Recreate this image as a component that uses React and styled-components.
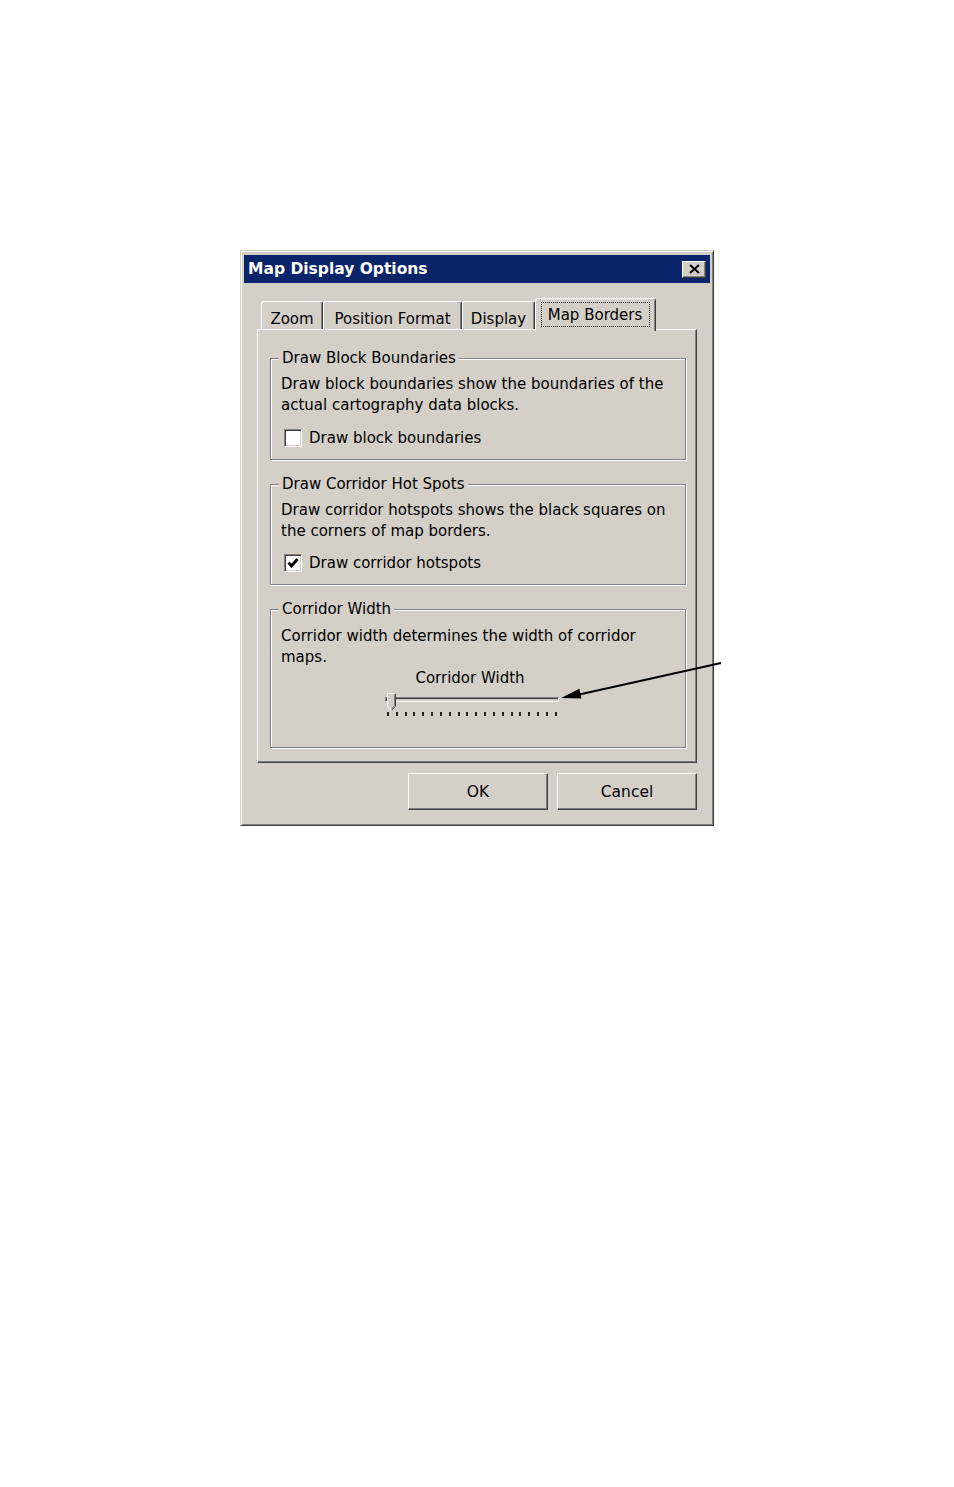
import React from 'react';
import styled, { createGlobalStyle } from 'styled-components';

const GlobalStyle = createGlobalStyle`
  html, body {
    margin: 0;
    padding: 0;
    background: #ffffff;
  }
  body {
    font-family: "DejaVu Sans", "Liberation Sans", sans-serif;
    font-size: 15px;
    color: #000;
  }
`;

const Page = styled.div`
  width: 954px;
  height: 1487px;
  padding: 250px 0 0 240px;
  box-sizing: border-box;
`;

const Win = styled.div`
  position: relative;
  width: 474px;
  height: 576px;
  box-sizing: border-box;
  background: #d4d0c8;
  border: 1px solid;
  border-color: #d4d0c8 #404040 #404040 #d4d0c8;
  box-shadow: inset 1px 1px 0 #fff, inset -1px -1px 0 #808080;
  padding: 4px 3px 3px 3px;
  display: flex;
  flex-direction: column;
`;

const TitleBar = styled.div`
  height: 28px;
  background: #0a246a;
  display: flex;
  align-items: center;
  justify-content: space-between;
  padding: 0 4px;
`;

const TitleText = styled.span`
  color: #fff;
  font-weight: bold;
  font-size: 15.5px;
`;

const CloseBtn = styled.div`
  width: 24px;
  height: 17px;
  box-sizing: border-box;
  background: #d4d0c8;
  border: 1px solid;
  border-color: #fff #404040 #404040 #fff;
  box-shadow: inset -1px -1px 0 #808080;
  display: flex;
  align-items: center;
  justify-content: center;
`;

const Body = styled.div`
  padding: 15px 13px 0 13px;
  display: flex;
  flex-direction: column;
`;

const TabRow = styled.div`
  display: flex;
  align-items: flex-start;
  height: 31px;
  padding-left: 4px;
`;

const Tab = styled.div`
  position: relative;
  z-index: ${p => (p.$active ? 2 : 1)};
  width: ${p => p.$w}px;
  height: ${p => (p.$active ? 33 : 28)}px;
  margin-top: ${p => (p.$active ? 0 : 3)}px;
  box-sizing: border-box;
  background: #d4d0c8;
  border: 1px solid;
  border-bottom: none;
  border-color: #fff #404040 transparent #fff;
  border-radius: 3px 3px 0 0;
  box-shadow: inset -1px 0 0 #808080;
  display: flex;
  justify-content: center;
  padding-top: ${p => (p.$active ? 3 : 6)}px;
`;

const FocusLabel = styled.span`
  display: inline-block;
  height: 25px;
  line-height: 24px;
  box-sizing: border-box;
  padding: 0 7px 0 6px;
  border: 1px dotted #000;
`;

const TabLabel = styled.span`
  line-height: 22px;
`;

const Panel = styled.div`
  height: 434px;
  box-sizing: border-box;
  border: 1px solid;
  border-color: #fff #404040 #404040 #fff;
  box-shadow: inset -1px -1px 0 #808080;
  padding: 18px 10px 0 12px;
  display: flex;
  flex-direction: column;
  gap: 14px;
`;

const Group = styled.fieldset`
  margin: 0;
  padding: 0;
  min-width: 0;
  border: 1px solid #808080;
  box-shadow: inset 1px 1px 0 #fff, 1px 1px 0 #fff;
`;

const Legend = styled.legend`
  margin-left: 8px;
  padding: 0 3px;
  line-height: 21px;
  background: #d4d0c8;
`;

const GroupBody = styled.div`
  padding: ${p => p.$top}px 8px ${p => p.$bottom}px 10px;
`;

const Desc = styled.div`
  line-height: 21px;
`;

const CheckRow = styled.div`
  display: flex;
  align-items: center;
  gap: 7px;
  margin-top: ${p => p.$mt ?? 13}px;
  margin-left: 3px;
  line-height: 18px;
`;

const CheckBox = styled.div`
  width: 18px;
  height: 18px;
  box-sizing: border-box;
  background: #fff;
  border: 1px solid;
  border-color: #808080 #fff #fff #808080;
  box-shadow: inset 1px 1px 0 #404040, inset -1px -1px 0 #d4d0c8;
  display: flex;
  align-items: center;
  justify-content: center;
`;

const SliderBlock = styled.div`
  width: 174px;
  margin-left: 104px;
  display: flex;
  flex-direction: column;
  align-items: center;
`;

const SliderLabel = styled.div`
  line-height: 21px;
  margin-left: -4px;
`;

const TrackArea = styled.div`
  position: relative;
  width: 174px;
  height: 16px;
  margin-top: 7px;
`;

const Track = styled.div`
  margin-top: 1px;
  height: 5px;
  box-sizing: border-box;
  border: 1px solid;
  border-color: #808080 #fff #fff #808080;
  box-shadow: inset 1px 1px 0 #404040, inset -1px -1px 0 #d4d0c8;
`;

const Thumb = styled.svg`
  position: absolute;
  left: 2px;
  top: -3px;
`;

const Ticks = styled.div`
  width: 170px;
  margin-left: 2px;
  height: 4px;
  display: flex;
  justify-content: space-between;
  align-self: flex-start;
`;

const Tick = styled.div`
  width: 2px;
  height: 4px;
  background: #222;
`;

const ButtonRow = styled.div`
  display: flex;
  justify-content: flex-end;
  gap: 9px;
  margin-top: 10px;
`;

const Button = styled.div`
  width: 140px;
  height: 37px;
  box-sizing: border-box;
  background: #d4d0c8;
  border: 1px solid;
  border-color: #fff #404040 #404040 #fff;
  box-shadow: inset -1px -1px 0 #808080;
  display: flex;
  align-items: center;
  justify-content: center;
  font-size: 15.5px;
`;

const Arrow = styled.svg`
  position: absolute;
  left: 310px;
  top: 405px;
  overflow: visible;
`;

const tabs = [
  { label: 'Zoom', w: 62 },
  { label: 'Position Format', w: 139 },
  { label: 'Display', w: 73 },
  { label: 'Map Borders', w: 121, active: true },
];

const Check = ({ checked }) => (
  <CheckBox>
    {checked && (
      <svg width="12" height="12" viewBox="0 0 12 12">
        <polyline points="1.5,5.5 4.5,9 10.5,2" fill="none" stroke="#000" strokeWidth="2.8" />
      </svg>
    )}
  </CheckBox>
);

export default function App() {
  return (
    <Page>
      <GlobalStyle />
      <Win>
        <TitleBar>
          <TitleText>Map Display Options</TitleText>
          <CloseBtn>
            <svg width="11" height="10" viewBox="0 0 11 10">
              <path d="M1 1 L10 9 M10 1 L1 9" stroke="#000" strokeWidth="2" />
            </svg>
          </CloseBtn>
        </TitleBar>
        <Body>
          <TabRow>
            {tabs.map(t => (
              <Tab key={t.label} $w={t.w} $active={t.active}>
                {t.active ? <FocusLabel>{t.label}</FocusLabel> : <TabLabel>{t.label}</TabLabel>}
              </Tab>
            ))}
          </TabRow>
          <Panel>
            <Group>
              <Legend>Draw Block Boundaries</Legend>
              <GroupBody $top={5} $bottom={12}>
                <Desc>
                  Draw block boundaries show the boundaries of the
                  <br />
                  actual cartography data blocks.
                </Desc>
                <CheckRow>
                  <Check />
                  <span>Draw block boundaries</span>
                </CheckRow>
              </GroupBody>
            </Group>
            <Group>
              <Legend>Draw Corridor Hot Spots</Legend>
              <GroupBody $top={5} $bottom={12}>
                <Desc>
                  Draw corridor hotspots shows the black squares on
                  <br />
                  the corners of map borders.
                </Desc>
                <CheckRow $mt={12}>
                  <Check checked />
                  <span>Draw corridor hotspots</span>
                </CheckRow>
              </GroupBody>
            </Group>
            <Group>
              <Legend>Corridor Width</Legend>
              <GroupBody $top={6} $bottom={31}>
                <Desc>
                  Corridor width determines the width of corridor
                  <br />
                  maps.
                </Desc>
                <SliderBlock>
                  <SliderLabel>Corridor Width</SliderLabel>
                  <TrackArea>
                    <Track />
                    <Thumb width="10" height="19" viewBox="0 0 10 19">
                      <polygon points="0,0 9,0 9,13 4.5,18 0,13" fill="#d4d0c8" />
                      <polyline points="0.5,13 0.5,0.5 8.5,0.5" fill="none" stroke="#fff" />
                      <polyline points="8.5,0.5 8.5,13 4.5,17.5" fill="none" stroke="#404040" />
                      <polyline points="7.5,1.5 7.5,12.5 4.5,16" fill="none" stroke="#808080" />
                      <line x1="0.5" y1="13" x2="4.5" y2="17.5" stroke="#fff" />
                    </Thumb>
                  </TrackArea>
                  <Ticks>
                    {Array.from({ length: 20 }).map((_, i) => (
                      <Tick key={i} />
                    ))}
                  </Ticks>
                </SliderBlock>
              </GroupBody>
            </Group>
          </Panel>
          <ButtonRow>
            <Button>OK</Button>
            <Button>Cancel</Button>
          </ButtonRow>
        </Body>
        <Arrow width="180" height="50" viewBox="0 0 180 50">
          <line x1="170" y1="7" x2="26" y2="39" stroke="#000" strokeWidth="2" />
          <polygon points="10,42 30.5,42.6 28.3,32.8" fill="#000" />
        </Arrow>
      </Win>
    </Page>
  );
}
